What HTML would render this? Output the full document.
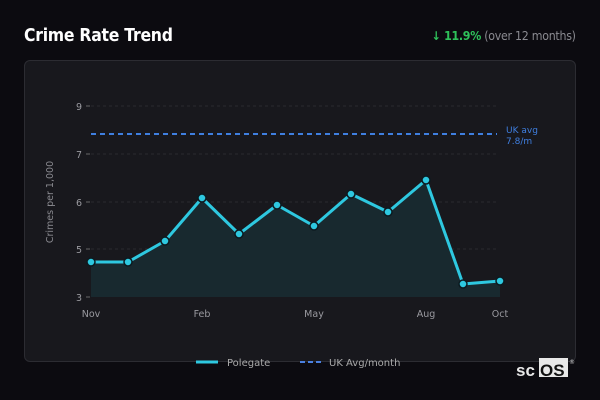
<!DOCTYPE html>
<html><head><meta charset="utf-8"><style>
html,body{margin:0;padding:0;width:600px;height:400px;background:#0c0b10;overflow:hidden;font-family:"Liberation Sans","DejaVu Sans",sans-serif}
.t{position:absolute;left:24px;top:25px;color:#fff;font:bold 18px "DejaVu Sans",sans-serif;letter-spacing:-0.3px;transform:scaleX(0.87);transform-origin:left}
.r{position:absolute;right:24px;top:29px;font:12px "DejaVu Sans",sans-serif;color:#8a8a90;letter-spacing:-0.3px;transform:scaleX(0.92);transform-origin:right}
.r b{color:#2ec25a}
.card{position:absolute;left:24px;top:60px;width:550px;height:300px;background:#18181d;border:1px solid #2c2c32;border-radius:6px}
</style></head><body>
<div class="t">Crime Rate Trend</div>
<div class="r"><b>↓ 11.9%</b> (over 12 months)</div>
<div class="card"></div>
<svg width="600" height="400" style="position:absolute;left:0;top:0" font-family="DejaVu Sans,sans-serif">
<g stroke="#2a2a30" stroke-dasharray="3,3" stroke-width="1">
<line x1="91" y1="106" x2="498" y2="106"/><line x1="91" y1="154" x2="498" y2="154"/><line x1="91" y1="202" x2="498" y2="202"/><line x1="91" y1="249" x2="498" y2="249"/>
</g>
<g stroke="#666" stroke-width="1"><line x1="86" y1="106" x2="90" y2="106"/><line x1="86" y1="154" x2="90" y2="154"/><line x1="86" y1="202" x2="90" y2="202"/><line x1="86" y1="249" x2="90" y2="249"/><line x1="86" y1="297" x2="90" y2="297"/></g>
<g fill="#9a9aa0" font-size="9.5" text-anchor="end"><text x="82" y="110">9</text><text x="82" y="158">7</text><text x="82" y="206">6</text><text x="82" y="253">5</text><text x="82" y="301">3</text></g>
<text transform="translate(53,202) rotate(-90)" fill="#8a8a90" font-size="9.5" text-anchor="middle">Crimes per 1,000</text>
<g fill="#9a9aa0" font-size="9.5" text-anchor="middle"><text x="91" y="317">Nov</text><text x="202" y="317">Feb</text><text x="314" y="317">May</text><text x="426" y="317">Aug</text><text x="500" y="317">Oct</text></g>
<line x1="91" y1="134" x2="497" y2="134" stroke="#3f7fe0" stroke-width="2" stroke-dasharray="5,4"/>
<text x="506" y="133" fill="#3f7fe0" font-size="9">UK avg</text><text x="506" y="144" fill="#3f7fe0" font-size="9">7.8/m</text>
<path d="M91,262 L128,262 165,241 202,198 239,234 277,205 314,226 351,194 388,212 426,180 463,284 500,281 L500,297 L91,297Z" fill="#18292f"/>
<polyline points="91,262 128,262 165,241 202,198 239,234 277,205 314,226 351,194 388,212 426,180 463,284 500,281" fill="none" stroke="#2ec8e0" stroke-width="3" stroke-linejoin="round"/>
<g fill="#2ec8e0" stroke="#0c1a20" stroke-width="1.5">
<circle cx="91" cy="262" r="4"/><circle cx="128" cy="262" r="4"/><circle cx="165" cy="241" r="4"/><circle cx="202" cy="198" r="4"/><circle cx="239" cy="234" r="4"/><circle cx="277" cy="205" r="4"/><circle cx="314" cy="226" r="4"/><circle cx="351" cy="194" r="4"/><circle cx="388" cy="212" r="4"/><circle cx="426" cy="180" r="4"/><circle cx="463" cy="284" r="4"/><circle cx="500" cy="281" r="4"/></g>
<line x1="196" y1="362" x2="218" y2="362" stroke="#2ec8e0" stroke-width="3"/>
<text x="227" y="366" fill="#aaa" font-size="10">Polegate</text>
<line x1="300" y1="362" x2="322" y2="362" stroke="#4a80e0" stroke-width="2" stroke-dasharray="5,3"/>
<text x="329" y="366" fill="#aaa" font-size="10">UK Avg/month</text>
<rect x="539" y="358" width="29" height="19" fill="#e8e8e8"/>
<text x="516" y="376" fill="#e8e8e8" font-size="17" font-weight="bold" font-family="Liberation Sans,sans-serif">sc</text>
<text x="540" y="376" fill="#111" font-size="17" font-weight="bold" font-family="Liberation Sans,sans-serif">OS</text>
<text x="569" y="364" fill="#ccc" font-size="6">®</text>
</svg>
</body></html>
